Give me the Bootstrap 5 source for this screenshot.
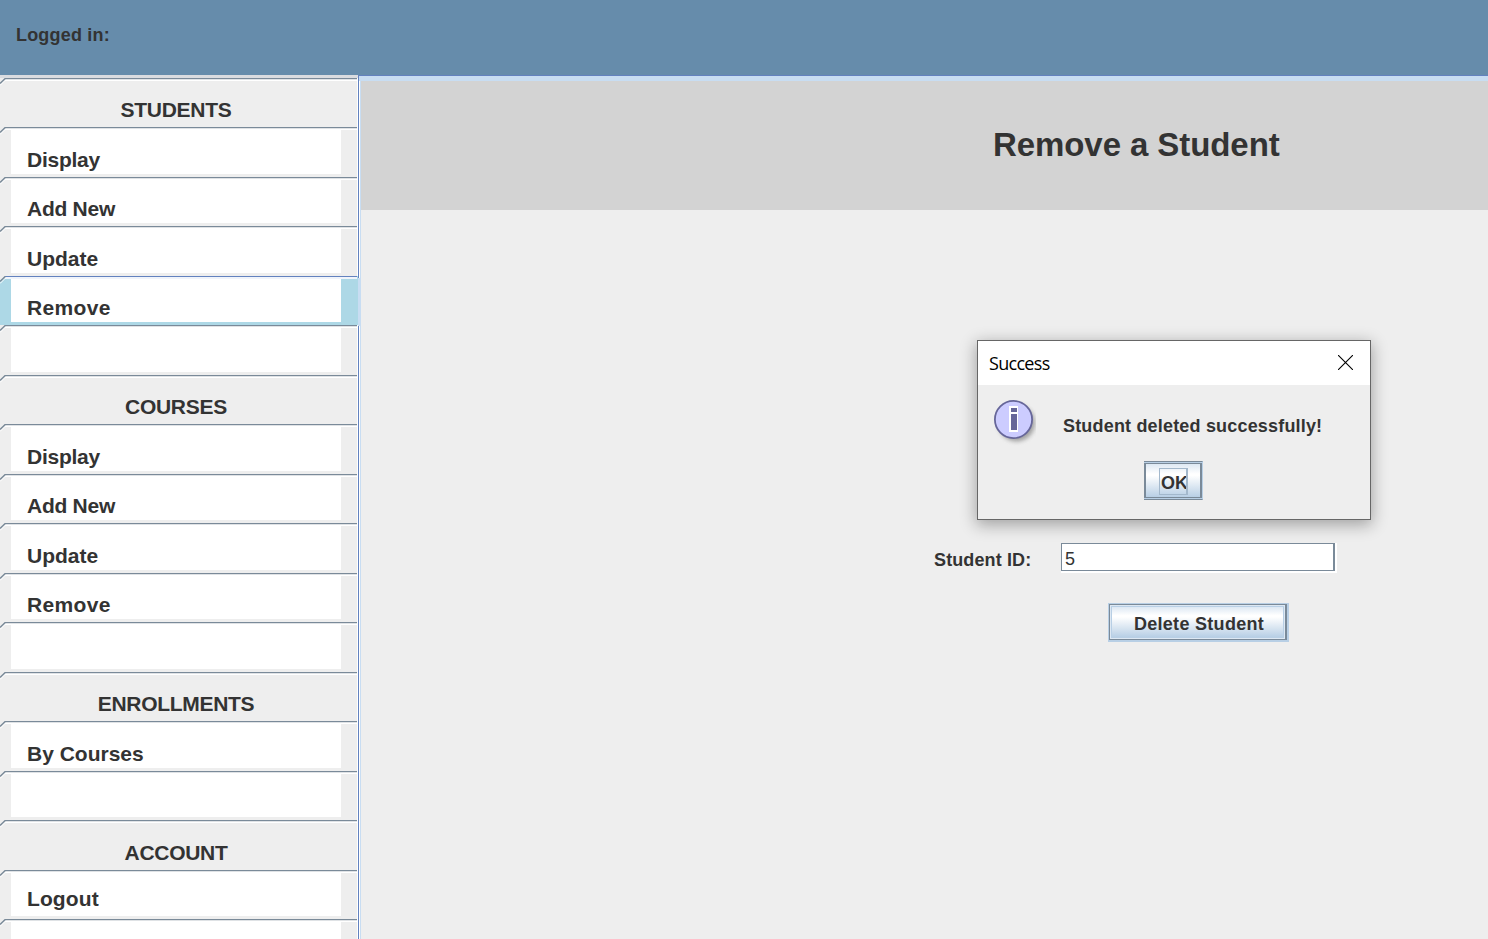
<!DOCTYPE html>
<html lang="en">
<head>
<meta charset="utf-8">
<meta name="viewport" content="width=device-width, initial-scale=1">
<title>Remove a Student</title>
<link href="https://cdn.jsdelivr.net/npm/bootstrap@5.3.0/dist/css/bootstrap.min.css" rel="stylesheet">
<style>
body{font-family:"Liberation Sans",Arial,sans-serif;color:#333;background:#eee;line-height:1.15;height:939px}
.topbar{height:75px;background:#668cab;padding:25px 16px 0;font-size:18px;font-weight:700;line-height:21px;letter-spacing:.19px}
.side{width:361px;padding-top:3px;background:linear-gradient(#dadce0,#dadce0) 0 0/358px 3px no-repeat,linear-gradient(90deg,#eee 357px,#fff 357px 358px,#6382bf 358px 359px,#fff 359px 360px,#c8ddf2 360px)}
.tabrow{height:49px;width:358px;position:relative;flex:none;font-size:21px;font-weight:700;line-height:24px}
.tabrow:nth-child(even){height:50px}
.tabrow .corner{position:absolute;left:0;top:0;width:6px;height:8px;z-index:1}
.tabrow::before{content:"";position:absolute;left:5px;right:1px;top:0;height:3px;background:linear-gradient(#7a8a99 1px,#dfe2e5 1px 2px,#fff 2px)}
.tab-label{margin:0 17px 0 11px;height:calc(100% - 3px);padding:20px 16px 0;background:#fff;white-space:pre}
.tabrow:nth-child(even) .tab-label{padding-top:21px}
.tabrow.head .tab-label{text-align:center;background:#eee;padding-top:20px;letter-spacing:-.3px}
.tabrow.head:nth-child(even) .tab-label{padding-top:21px}
.tabrow.logout .tab-label{padding-top:17px;letter-spacing:.1px}
.narrow{letter-spacing:-.26px}
.wide{letter-spacing:.35px}
.selected{background:#add8e6}
.selected::before{background:linear-gradient(#6382bf 1px,#f0f4fb 1px)}
.selected::after{content:"";position:absolute;left:358px;top:2px;width:3px;height:48px;background:#c8ddf2}
.pane{border-top:1px solid #6382bf;margin-left:-3px;min-width:0}
.pane-edge{height:5px;background:#c8ddf2;margin-left:1px}
.pane-title{height:129px;background:#d3d3d3;margin-left:3px;padding:44px 0 0 632px;font-size:33px;font-weight:700;line-height:40px;letter-spacing:-.08px}
.form-zone{padding:333px 0 0 576px;font-size:18px;font-weight:700}
.idlabel{width:127px;line-height:21px;padding-top:7px;letter-spacing:.12px}
.idfield{width:276px;height:30px;background:#fff}
.idfield div{width:274px;height:28px;border:1px solid #7a8a99;border-right-width:2px;font-weight:400;line-height:21px;padding:5px 0 0 3px}
.metal{border:1px solid #b8cfe5;border-right-width:2px;border-bottom-width:2px;border-radius:0;background:#dde8f3;padding:0;display:block;color:#333;font:700 18px/21px "Liberation Sans",Arial,sans-serif}
.metal>span{display:block;border:1px solid #7a8a99;border-right-width:2px;height:100%;padding:1px}
.metal>span>span{display:block;height:100%;border:1px solid #b8cfe5;background:linear-gradient(#dde8f3,#fff 28%,#fff 33%,#b8cfe5)}
.delbtn{width:181px;height:39px;margin:30px 0 0 174px;letter-spacing:.3px}
.delbtn>span>span{padding-top:7px;padding-left:3px}
.dialogbox{position:absolute;left:977px;top:340px;width:394px;height:180px;border:1px solid #666;background:#eee;box-shadow:0 4px 15px 1px rgba(0,0,0,.32);z-index:5}
.dialogtitle{height:44px;background:#fff;color:#000;font:18px/24px "Open Sans","Noto Sans",sans-serif;padding:0 17px 0 11px}
.dialogtitle span{letter-spacing:-.7px}
.dialogtitle svg{margin-bottom:1px}
.message{padding-left:27px;padding-top:31px;font-size:18px;font-weight:700;line-height:21px;letter-spacing:.18px}
.okbtn{width:59px;height:39px;margin-left:166px;border:1px solid #7a8a99;border-right:1px solid #b8cfe5;border-left:0;background:#b8cfe5}
.okbtn>span{border:2px solid #7a8a99;border-top-width:1px;border-bottom-width:1px;margin:1px 0;height:35px;padding:0;background:linear-gradient(#dde8f3,#fff 30%,#fff 35%,#b8cfe5)}
.okbtn>span>span{width:29px;height:27px;margin:4px 0 0 13px;border:1px solid #a3b8cc;border-right-width:2px;background:none;padding:4px 0 0 1px;text-align:left;overflow:hidden}
</style>
<script src="https://cdn.jsdelivr.net/npm/bootstrap@5.3.0/dist/js/bootstrap.bundle.min.js"></script>
</head>
<body class="d-flex flex-column overflow-hidden">
<svg width="0" height="0" class="position-absolute"><defs><g id="notch"><path d="M0 0H5L0 5Z" fill="#eee"/><path d="M0 7.5L6 1.5" stroke="#fff" fill="none"/><path d="M0 5.5L5.5.2" stroke="#7a8a99" stroke-width="1.4" fill="none"/></g></defs></svg>
<header class="topbar flex-shrink-0">Logged in:</header>
<div class="d-flex flex-grow-1 overflow-hidden">
<nav class="side d-flex flex-column flex-shrink-0 overflow-hidden" id="side">
<div class="tabrow head"><div class="tab-label">STUDENTS</div></div>
<div class="tabrow"><div class="tab-label narrow">Display</div></div>
<div class="tabrow"><div class="tab-label narrow">Add New</div></div>
<div class="tabrow"><div class="tab-label">Update</div></div>
<div class="tabrow selected"><div class="tab-label wide">Remove</div></div>
<div class="tabrow"><div class="tab-label"></div></div>
<div class="tabrow head"><div class="tab-label">COURSES</div></div>
<div class="tabrow"><div class="tab-label narrow">Display</div></div>
<div class="tabrow"><div class="tab-label narrow">Add New</div></div>
<div class="tabrow"><div class="tab-label">Update</div></div>
<div class="tabrow"><div class="tab-label wide">Remove</div></div>
<div class="tabrow"><div class="tab-label"></div></div>
<div class="tabrow head"><div class="tab-label">ENROLLMENTS</div></div>
<div class="tabrow"><div class="tab-label">By Courses</div></div>
<div class="tabrow"><div class="tab-label"></div></div>
<div class="tabrow head"><div class="tab-label">ACCOUNT</div></div>
<div class="tabrow logout"><div class="tab-label">Logout</div></div>
<div class="tabrow"><div class="tab-label"></div></div>
</nav>
<main class="pane flex-grow-1">
<div class="pane-edge"></div>
<h1 class="pane-title mb-0">Remove a Student</h1>
<div class="form-zone">
<div class="d-flex"><label class="idlabel">Student ID:</label><div class="idfield"><div>5</div></div></div>
<button class="metal delbtn" type="button"><span><span>Delete Student</span></span></button>
</div>
</main>
</div>
<section class="dialogbox" role="dialog" aria-label="Success">
<div class="dialogtitle d-flex align-items-center justify-content-between"><span>Success</span>
<svg width="15" height="15" viewBox="0 0 15 15"><path d="M0 0l15 15M15 0L0 15" stroke="#000" stroke-width="1.1"/></svg></div>
<div class="d-flex" style="height:76px"><svg width="46" height="50" viewBox="0 0 46 50" style="margin:11px 0 0 12px">
<defs><filter id="soft"><feGaussianBlur stdDeviation="2"/></filter></defs>
<circle cx="26.5" cy="27" r="18.5" fill="#777" opacity=".65" filter="url(#soft)"/>
<circle cx="23.5" cy="23.5" r="18.6" fill="#ccf" stroke="#669" stroke-width="1.8"/>
<path d="M19 10h9v26h-9z" fill="#fff"/><path d="M21 12h6v4h-6zM21 18h6v16h-6z" fill="#669"/></svg>
<div class="message">Student deleted successfully!</div></div>
<button class="metal okbtn" type="button"><span><span>OK</span></span></button>
</section>
<script>
document.querySelectorAll('.tabrow').forEach(function(row){
  row.insertAdjacentHTML('afterbegin','<svg class="corner" viewBox="0 0 6 8"><use href="#notch"/></svg>');
});
</script>
</body>
</html>
